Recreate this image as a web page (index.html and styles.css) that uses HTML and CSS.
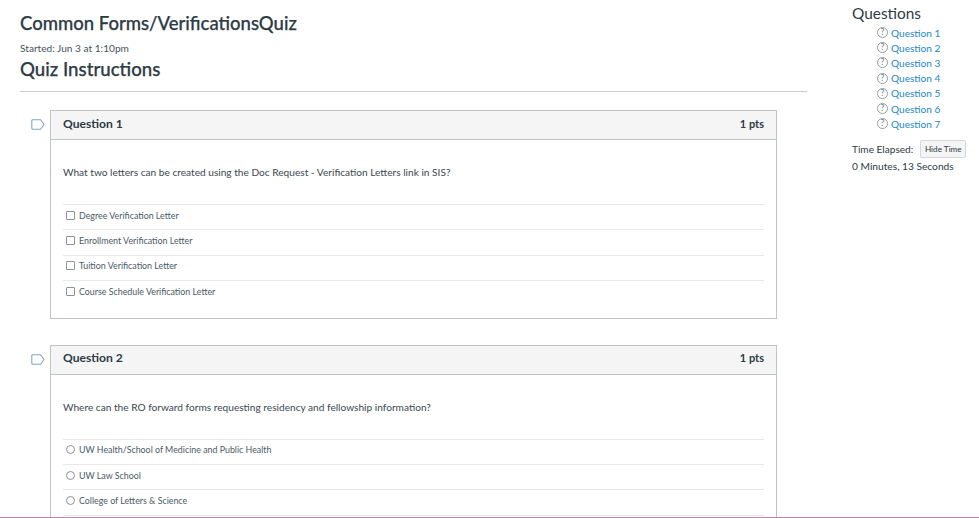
FILE: index.html
```html
<!DOCTYPE html>
<html lang="en">
<head>
<meta charset="utf-8">
<title>Common Forms/VerificationsQuiz</title>
<link rel="stylesheet" href="styles.css">
</head>
<body>
<div class="page">
  <main class="main">
    <h1 class="title">Common Forms/VerificationsQuiz</h1>
    <p class="started">Started: Jun 3 at 1:10pm</p>
    <h2 class="instructions">Quiz Instructions</h2>
    <hr class="rule">
    <section class="question-row">
      <svg class="flag" viewBox="0 0 14 11" width="14" height="11"><path d="M1.800.7h7.800L13 5.500 9.600 10.300H1.800a1 1 0 0 1-1-1V1.700a1 1 0 0 1 1-1z" fill="none" stroke="#7fa6c4" stroke-width="1.100" stroke-linejoin="round"/></svg>
      <div class="card">
        <header class="card-head"><span>Question 1</span><span class="pts">1 pts</span></header>
        <div class="card-body">
          <p class="prompt">What two letters can be created using the Doc Request - Verification Letters link in SIS?</p>
          <ul class="answers">
            <li><span class="check"></span>Degree Verification Letter</li>
            <li><span class="check"></span>Enrollment Verification Letter</li>
            <li><span class="check"></span>Tuition Verification Letter</li>
            <li><span class="check"></span>Course Schedule Verification Letter</li>
          </ul>
        </div>
      </div>
    </section>
    <section class="question-row question-last">
      <svg class="flag" viewBox="0 0 14 11" width="14" height="11"><path d="M1.800.7h7.800L13 5.500 9.600 10.300H1.800a1 1 0 0 1-1-1V1.700a1 1 0 0 1 1-1z" fill="none" stroke="#7fa6c4" stroke-width="1.100" stroke-linejoin="round"/></svg>
      <div class="card">
        <header class="card-head"><span>Question 2</span><span class="pts">1 pts</span></header>
        <div class="card-body">
          <p class="prompt">Where can the RO forward forms requesting residency and fellowship information?</p>
          <ul class="answers">
            <li><span class="radio"></span>UW Health/School of Medicine and Public Health</li>
            <li><span class="radio"></span>UW Law School</li>
            <li><span class="radio"></span>College of Letters &amp; Science</li>
          </ul>
          <div class="next-rule"></div>
        </div>
      </div>
    </section>
  </main>
  <aside class="side">
    <h2 class="side-title">Questions</h2>
    <ul class="qlist">
      <li><span class="qmark">?</span><a href="#">Question 1</a></li>
      <li><span class="qmark">?</span><a href="#">Question 2</a></li>
      <li><span class="qmark">?</span><a href="#">Question 3</a></li>
      <li><span class="qmark">?</span><a href="#">Question 4</a></li>
      <li><span class="qmark">?</span><a href="#">Question 5</a></li>
      <li><span class="qmark">?</span><a href="#">Question 6</a></li>
      <li><span class="qmark">?</span><a href="#">Question 7</a></li>
    </ul>
    <div class="timer"><span>Time Elapsed:</span><button class="hide" type="button">Hide Time</button></div>
    <p class="elapsed">0 Minutes, 13 Seconds</p>
  </aside>
</div>
</body>
</html>
```
FILE: styles.css
```css
html, body { margin: 0; height: 518px; overflow: hidden; background: #fff; }
body { font-family: Lato, "Open Sans", sans-serif; color: #2d3b45; font-variant-ligatures: common-ligatures; }
.page { display: flex; align-items: stretch; height: 517px; border-bottom: 1px solid #c77fb0; overflow: hidden; }
.main { display: flex; flex-direction: column; width: 787px; margin-left: 20px; padding-top: 11px; flex: none; }
.title { margin: 0; font-size: 18.500px; line-height: 25px; font-weight: 500; -webkit-text-stroke: .25px #2d3b45; }
.started { margin: 5px 0 0; font-size: 10.150px; line-height: 14px; color: #46535c; }
.instructions { margin: 2px 0 0; font-size: 18.650px; line-height: 24px; font-weight: 500; -webkit-text-stroke: .25px #2d3b45; }
.rule { margin: 10px 0 0; border: 0; border-top: 1px solid #c7cdd1; }
.question-row { display: flex; align-items: flex-start; gap: 5px; margin: 18px 30px 8px 0; padding-left: 11px; }
.question-last { flex: 1; align-items: stretch; margin-bottom: 0; }
.flag { flex: none; margin-top: 9px; }
.card { flex: 1; border: 1px solid #bfc4c7; min-width: 0; }
.question-last .card { border-bottom: 0; }
.card-head { display: flex; justify-content: space-between; align-items: center; height: 24px; padding: 0 12px 4px; background: #f5f5f5; border-bottom: 1px solid #bfc4c7; font-size: 12.100px; font-weight: 700; }
.pts { font-size: 11px; }
.card-body { padding: 0 12px 12px; }
.question-last .card-body { padding-bottom: 0; }
.prompt { margin: 0; padding: 25px 0 25px; font-size: 10.150px; line-height: 14px; color: #3a4750; }
.answers { list-style: none; margin: 0; padding: 0; }
.answers li { display: flex; align-items: center; height: 20.400px; padding-bottom: 4px; border-top: 1px solid #e6e9ea; font-size: 8.850px; color: #4a5a66; }
.next-rule { border-top: 1px solid #e6e9ea; }
.check, .radio { flex: none; width: 7px; height: 7px; margin: 0 4px 0 3px; border: 1px solid #8a949b; background: #fff; }
.check { border-radius: 1px; }
.radio { border-radius: 50%; }
.side { margin-left: 45px; padding-top: 4px; width: 120px; flex: none; }
.side-title { margin: 0; font-size: 15.400px; line-height: 18px; font-weight: 400; }
.qlist { list-style: none; margin: 3px 0 0; padding: 0 0 0 25px; }
.qlist li { display: flex; align-items: center; height: 15.200px; font-size: 10.100px; }
.qlist a { color: #1b87c4; text-decoration: none; }
.qmark { flex: none; width: 9px; height: 9px; margin-right: 3px; border: 1px solid #949ea5; border-radius: 50%; font-size: 8.500px; line-height: 9px; text-align: center; color: #6b7780; }
.timer { display: flex; align-items: center; gap: 7px; margin-top: 9px; font-size: 10.100px; }
.hide { height: 18px; width: 46px; padding: 0; border: 1px solid #d4d8db; border-radius: 2px; background: #f5f5f5; color: #2d3b45; font: 8.200px Lato, sans-serif; }
.elapsed { margin: 1px 0 0; font-size: 10.200px; line-height: 14px; white-space: nowrap; }
```
